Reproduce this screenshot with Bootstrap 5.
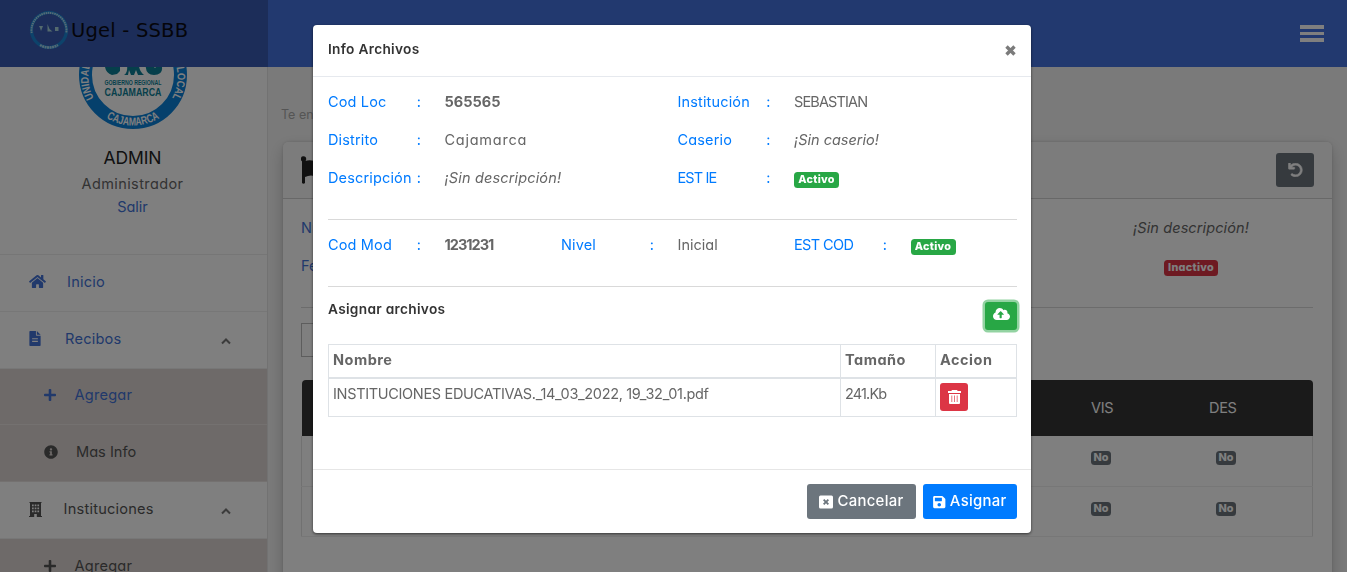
<!DOCTYPE html>
<html lang="es">
<head>
<meta charset="utf-8">
<meta name="viewport" content="width=device-width, initial-scale=1">
<title>Ugel - SSBB</title>
<link href="https://cdn.jsdelivr.net/npm/bootstrap@5.3.0/dist/css/bootstrap.min.css" rel="stylesheet">
<style>
  html, body { height: 100%; overflow: hidden; }
  body { font-family: Inter, "Open Sans", sans-serif; font-feature-settings: "cv11"; font-size: 14.5px; line-height: 24px; color: #666; background: #f5f5f5; }
  svg { fill: currentColor; flex: none; }
  a { text-decoration: none; }
  .brand-zone { width: 268px; background: #385bb3; padding-left: 29px; color: #0a0a14; font: 19.5px "DejaVu Sans", sans-serif; }
  .brand-zone svg, .brand-t { margin-top: -7px; }
  .brand-t { margin-left: 2px; letter-spacing: .2px; }
  .topbar { height: 67px; background: #4472de; color: #fff; }
  .burger { width: 24px; gap: 3px; margin-right: 23px; }
  .burger i { height: 3.4px; background: #fff; }
  .shell { height: calc(100vh - 67px); }
  .side { width: 268px; background: #fff; border-right: 1px solid #e5e5e5; }
  .profile { height: 188px; border-bottom: 1px solid #ededed; padding-right: 2px; }
  .profile svg { margin-top: -46px; }
  .profile h5 { font-size: 17.5px; line-height: 22px; margin: 18px 0 3px; color: #222; font-weight: 400; letter-spacing: -.1px; }
  .profile span, .profile a { line-height: 23px; letter-spacing: .4px; }
  .profile a { letter-spacing: 0; }
  .blue { color: #4272d7; }
  .item { height: 56.8px; border-bottom: 1px solid #efefef; padding: 0 36px 2px 29px; font-size: 14.6px; letter-spacing: .22px; color: #555; }
  .item.blue { color: #4272d7; }
  .item.sub { background: #dcd4d2; padding-left: 44px; border-color: #e8e2e0; }
  .main-zone { padding: 36px 15px 0 15px; min-width: 0; }
  .crumb { font-size: 12.5px; line-height: 24px; color: #aaa; margin-left: -2px; margin-bottom: 15px; }
  .panel-card { border: 0; height: 500px; box-shadow: 0 6px 16px rgba(0,0,0,.2), 0 0 3px rgba(0,0,0,.15); }
  .panel-card .card-header { height: 57px; padding: 0 18px; background: #f8f8f8; border-color: #d0d0d0; color: #222; }
  .panel-card .card-body { padding: 17px 19px 0 18px; }
  .btn-undo { width: 38px; height: 34px; background: #6c757d; color: #fff; border-radius: 3px; }
  .info-row { height: 38px; }
  .tail { width: 244px; text-align: center; letter-spacing: .1px; }
  .tag { display: inline-block; position: relative; top: 1px; font-size: 10.8px; line-height: 16px; font-weight: 800; letter-spacing: .3px; color: #fff; padding: 0 4.3px; border-radius: 3.5px; vertical-align: middle; }
  .g { background: #28a745; } .r { background: #dc3545; } .k { background: #6c757d; }
  .filter { height: 34px; width: 220px; border: 1px solid #bbb; margin: 15px 0 23px; }
  .grid-t { width: 1012px; margin: 0; table-layout: fixed; }
  .grid-t th { background: #343434; color: #fff; font-weight: 400; height: 56px; letter-spacing: -.3px; }
  .grid-t tr > * { border: 0; padding: 0; vertical-align: middle; text-align: left; }
  .grid-t thead th:first-child { border-radius: 4px 0 0 0; } .grid-t thead th:last-child { border-radius: 0 4px 0 0; }
  .grid-t td { height: 50px; border-bottom: 1px solid #efefef !important; background: #fff; color: #666; line-height: 14px; padding-bottom: 6px !important; }
  .grid-t td:first-child { border-left: 1px solid #e3e3e3; } .grid-t td:last-child { border-right: 1px solid #e3e3e3; padding-left: 7px; }
  .grid-t .tag { top: 0; line-height: 14px; padding: 0 2.6px; letter-spacing: 0; }
  .modal-dialog { max-width: 718px; margin: 25px 0 0 313px; }
  .modal-content { border: 0; border-radius: 4px; height: 508px; box-shadow: 0 1px 3px rgba(0,0,0,.6); color: #666; }
  .modal-header { height: 52px; padding: 0 15px 4px; border-color: #e6e9ee; color: #333; }
  .bold-t { font-size: 13.7px; font-weight: 600; letter-spacing: .3px; color: #333; }
  .modal-body { padding: 13px 14px 0 15px; }
  .modal-body .row { --bs-gutter-x: 10px; height: 38px; }
  .lab { color: #007bff; letter-spacing: .15px; }
  .lab::after { content: ":"; position: absolute; left: 93.8px; }
  .row > div { position: relative; white-space: nowrap; }
  .modal-body b { font-weight: 700; }
  .caps { letter-spacing: -.85px; }
  .wide-t { letter-spacing: .75px; }
  hr { margin: 0; border-color: #ccc; opacity: .75; }
  .sm-b { width: 28px; height: 28px; border-radius: 3px; color: #fff; }
  .up { width: 32px; box-shadow: 0 0 0 2.5px rgba(40,167,69,.5); padding-bottom: 5px; }
  .files { width: 689px; margin: 0; color: #666; border-color: #dee2e6; table-layout: fixed; }
  .files tr > * { padding: 3px 4px 5px; border: 1px solid #dee2e6; color: #666; background: none; }
  .files tbody td:last-child { padding: 4px 4px 5px; }
  .files thead th { border-bottom-width: 2px; font-weight: 700; height: 33px; font-size: 14.5px; letter-spacing: .5px; }
  .files .sm-b { display: flex; }
  .fname { letter-spacing: -.33px; }
  .modal-footer { height: 64px; border-color: #e6e6e6; padding: 0 14px; gap: 7px; }
  .modal-footer .btn { height: 35px; border: 0; border-radius: 3px; padding: 0; margin: 0; color: #fff; font-size: 14.9px; letter-spacing: .3px; font-weight: 500; display: flex; align-items: center; justify-content: center; gap: 4px; }
</style>
</head>
<body>
<header class="topbar d-flex align-items-center justify-content-between">
  <div class="brand-zone h-100 d-flex align-items-center">
    <svg width="40" height="40" viewBox="0 0 40 40">
      <circle cx="20" cy="20" r="17.500" fill="none" stroke="#1a86d6" stroke-width="3.200"/>
      <g fill="none" stroke="#a9d3ea"><path d="M2.700 23a17.500 17.500 0 1 1 34.600 0" stroke-width="2" stroke-dasharray="1.600 .6"/><path d="M11 35a17.500 17.500 0 0 0 18 0" stroke-width="2.600" stroke-dasharray="2 .5"/></g>
      <path fill="#a8d4dc" d="M10 16h4l-2 5-1-3zM18.500 14l2 5 3 2.500h-5zM26 17h3.500v4H26z"/>
    </svg>
    <span class="brand-t">Ugel - SSBB</span>
  </div>
  <div class="burger d-flex flex-column"><i></i><i></i><i></i></div>
</header>
<div class="shell d-flex overflow-hidden">
  <aside class="side flex-shrink-0 overflow-hidden">
    <div class="profile d-flex flex-column align-items-center overflow-hidden">
      <svg width="108" height="108" viewBox="0 0 108 108">
        <circle cx="54" cy="54" r="47.500" fill="#fff" stroke="#0a80d8" stroke-width="13"/>
        <path id="lo" d="M3.500 54a50.500 50.500 0 0 0 101 0" fill="none"/>
        <path id="up" d="M18 82a44.500 44.500 0 1 1 72 0" fill="none"/>
        <g fill="#fff" font-family="Liberation Sans Narrow, Liberation Sans" font-weight="700" text-anchor="middle">
          <text font-size="11.500"><textPath href="#lo" startOffset="50%" textLength="56" lengthAdjust="spacingAndGlyphs">CAJAMARCA</textPath></text>
          <text font-size="11"><textPath href="#up" startOffset="50%" textLength="184" lengthAdjust="spacingAndGlyphs">UNIDAD DE GESTION EDUCATIVA LOCAL</textPath></text>
        </g>
        <g fill="#0d7f96"><path d="M26 36h9v8q1 3 6 1v5l-3 3-5 1q-6-2-7-8zM45 54q4-2 3-10h12q0 6 5 10h-6l-2-5-2 5h-3l-2-5-1 5zM67 40q-2 14 8 14 9 0 8-8l-4-2-3 3-3-3v-4z"/>
        <g font-family="Liberation Sans" font-weight="700" text-anchor="middle"><text x="54" y="64" font-size="6.500" textLength="57" lengthAdjust="spacingAndGlyphs">GOBIERNO REGIONAL</text><text x="54" y="74.500" font-size="11.500" textLength="57" lengthAdjust="spacingAndGlyphs">CAJAMARCA</text></g></g>
      </svg>
      <h5>ADMIN</h5><span>Administrador</span><a class="blue">Salir</a>
    </div>
    <nav>
      <a class="item blue d-flex align-items-center"><svg width="17" height="15" viewBox="0 0 576 512"><path d="M280.370 148.260L96 300.110V464a16 16 0 0 0 16 16l112.060-.29a16 16 0 0 0 15.920-16V368a16 16 0 0 1 16-16h64a16 16 0 0 1 16 16v95.640a16 16 0 0 0 16 16.050L464 480a16 16 0 0 0 16-16V300L295.670 148.260a12.190 12.190 0 0 0-15.300 0zM571.600 251.470L488 182.560V44.050a12 12 0 0 0-12-12h-56a12 12 0 0 0-12 12v72.610L318.470 43a48 48 0 0 0-61 0L4.340 251.470a12 12 0 0 0-1.600 16.900l25.500 31A12 12 0 0 0 45.150 301l235.220-193.740a12.190 12.190 0 0 1 15.300 0L530.900 301a12 12 0 0 0 16.900-1.600l25.500-31a12 12 0 0 0-1.700-16.930z"/></svg><span style="margin-left:21px">Inicio</span></a>
      <a class="item blue d-flex align-items-center"><svg width="12" height="15" viewBox="0 0 384 512"><path fill-rule="evenodd" d="M224 136V0H24C10 0 0 10 0 24v464c0 14 10 24 24 24h336c14 0 24-10 24-24V160H248c-13 0-24-11-24-24zm66 110v38H94v-38zm0 90v38H94v-38zM256 0l128 128H256z"/></svg><span style="margin-left:24px">Recibos</span><svg class="ms-auto mt-1" width="10" height="10" viewBox="0 0 10 10"><path d="M1 7.500l4-4 4 4" fill="none" stroke="#777" stroke-width="2"/></svg></a>
      <a class="item sub blue d-flex align-items-center"><svg width="12" height="14" viewBox="0 0 448 512"><path d="M416 208H272V64c0-18-14-32-32-32h-32c-18 0-32 14-32 32v144H32c-18 0-32 14-32 32v32c0 18 14 32 32 32h144v144c0 18 14 32 32 32h32c18 0 32-14 32-32V304h144c18 0 32-14 32-32v-32c0-18-14-32-32-32z"/></svg><span style="margin-left:18.500px">Agregar</span></a>
      <a class="item sub d-flex align-items-center"><svg width="14" height="14" viewBox="0 0 512 512"><path d="M256 8C119 8 8 119 8 256s111 248 248 248 248-111 248-248S393 8 256 8zm0 110c23 0 42 19 42 42s-19 42-42 42-42-19-42-42 19-42 42-42zm56 254c0 7-5 12-12 12h-88c-7 0-12-5-12-12v-24c0-7 5-12 12-12h12v-64h-12c-7 0-12-5-12-12v-24c0-7 5-12 12-12h64c7 0 12 5 12 12v100h12c7 0 12 5 12 12v24z"/></svg><span style="margin-left:18px;letter-spacing:0">Mas Info</span></a>
      <a class="item d-flex align-items-center"><svg width="13" height="15" viewBox="0 0 13 15"><path fill-rule="evenodd" d="M.5 0h12v1H12v13h1v1H7.800v-3H5.200v3H0v-1h1V1H.500zM3 2.500v1.700h1.700V2.500zm2.700 0v1.700h1.700V2.500zm2.700 0v1.700h1.700V2.500zM3 5.500v1.700h1.700V5.500zm2.700 0v1.700h1.700V5.500zm2.700 0v1.700h1.700V5.500zM3 8.500v1.700h1.700V8.500zm2.700 0v1.700h1.700V8.500zm2.700 0v1.700h1.700V8.500z"/></svg><span style="margin-left:21.500px">Instituciones</span><svg class="ms-auto mt-1" width="10" height="10" viewBox="0 0 10 10"><path d="M1 7.500l4-4 4 4" fill="none" stroke="#777" stroke-width="2"/></svg></a>
      <a class="item sub d-flex align-items-center"><svg width="12" height="14" viewBox="0 0 448 512"><path d="M416 208H272V64c0-18-14-32-32-32h-32c-18 0-32 14-32 32v144H32c-18 0-32 14-32 32v32c0 18 14 32 32 32h144v144c0 18 14 32 32 32h32c18 0 32-14 32-32V304h144c18 0 32-14 32-32v-32c0-18-14-32-32-32z"/></svg><span style="margin-left:18.500px">Agregar</span></a>
    </nav>
  </aside>
  <main class="main-zone flex-grow-1">
    <div class="crumb">Te encuentras en</div>
    <div class="card panel-card">
      <div class="card-header d-flex align-items-center justify-content-between">
        <svg width="30" height="28" viewBox="0 0 30 28"><circle cx="2.500" cy="3" r="2.700"/><path d="M1 3h3v24q-1.500 1.500-3 0zM4 5q6-2 12 1t13 0v15q-7 3-13 0t-12 0z"/></svg>
        <button class="btn btn-undo p-0 d-flex align-items-center justify-content-center"><svg width="15" height="14" viewBox="0 0 512 512"><path stroke="currentColor" stroke-width="20" d="M212 224H12c-7 0-12-5-12-12V12C0 5 5 0 12 0h48c7 0 12 5 12 12v78C118 39 184 7 258 8c137 1 246 112 246 249 0 136-111 247-248 247-64 0-122-24-166-64-5-5-5-13-1-18l34-34c5-4 12-4 17 0 31 27 71 44 116 44 97 0 176-79 176-176S353 80 256 80c-58 0-110 28-142 72h98c7 0 12 5 12 12v48c0 7-5 12-12 12z"/></svg></button>
      </div>
      <div class="card-body">
        <div class="info-row d-flex justify-content-between"><span class="blue">Nro</span><i class="tail">¡Sin descripción!</i></div>
        <div class="info-row d-flex justify-content-between"><span class="blue">Fecha</span><span class="tail"><span class="tag r">Inactivo</span></span></div>
        <hr style="margin-top:15px">
        <div class="filter"></div>
        <table class="table grid-t">
          <colgroup><col style="width:789.500px"><col style="width:118px"><col></colgroup>
          <thead><tr><th></th><th>VIS</th><th>DES</th></tr></thead>
          <tbody>
            <tr><td></td><td><span class="tag k">No</span></td><td><span class="tag k">No</span></td></tr>
            <tr><td></td><td><span class="tag k">No</span></td><td><span class="tag k">No</span></td></tr>
          </tbody>
        </table>
      </div>
    </div>
  </main>
</div>
<div class="modal-backdrop show"></div>
<div class="modal d-block" tabindex="-1">
  <div class="modal-dialog">
    <div class="modal-content">
      <div class="modal-header">
        <span class="bold-t">Info Archivos</span>
        <svg width="11" height="11" viewBox="0 0 11 11" style="color:#7b7b7b;margin-top:3px"><path d="M1.500 1.500l8 8m0-8l-8 8" stroke="currentColor" stroke-width="3.400"/></svg>
      </div>
      <div class="modal-body">
        <div class="row"><div class="col-2 lab">Cod Loc</div><div class="col-4"><b>565565</b></div><div class="col-2 lab">Institución</div><div class="col-4 caps">SEBASTIAN</div></div>
        <div class="row"><div class="col-2 lab">Distrito</div><div class="col-4 wide-t">Cajamarca</div><div class="col-2 lab">Caserio</div><div class="col-4"><i>¡Sin caserio!</i></div></div>
        <div class="row"><div class="col-2 lab">Descripción</div><div class="col-4"><i style="letter-spacing:.15px">¡Sin descripción!</i></div><div class="col-2 lab caps">EST IE</div><div class="col-4"><span class="tag g">Activo</span></div></div>
        <hr style="margin:15px 0 13px">
        <div class="row"><div class="col-2 lab">Cod Mod</div><div class="col-2"><b style="letter-spacing:-1px">1231231</b></div><div class="col-2 lab">Nivel</div><div class="col-2">Inicial</div><div class="col-2 lab" style="letter-spacing:-.6px">EST COD</div><div class="col-2"><span class="tag g">Activo</span></div></div>
        <hr style="margin:15px 0 11px">
        <div class="d-flex justify-content-between align-items-start" style="height:46px">
          <span class="bold-t" style="line-height:22px">Asignar archivos</span>
          <button class="btn btn-success g sm-b up px-0 pt-0 border-0 d-flex align-items-center justify-content-center" style="margin-top:4px"><svg width="17" height="14" viewBox="0 0 640 512"><path d="M538 227c4-11 6-23 6-35 0-53-43-96-96-96-20 0-38 6-53 16-28-48-80-80-139-80-88 0-160 72-160 160v8C40 220 0 273 0 336c0 80 65 144 144 144h368c71 0 128-57 128-128 0-62-44-114-102-125zM393 288h-65v112c0 9-7 16-16 16h-48c-9 0-16-7-16-16V288h-65c-15 0-22-17-12-27l106-106c6-6 16-6 22 0l106 106c10 10 3 27-12 27z"/></svg></button>
        </div>
        <table class="table files">
          <colgroup><col style="width:512px"><col style="width:95px"><col></colgroup>
          <thead><tr><th>Nombre</th><th>Tamaño</th><th>Accion</th></tr></thead>
          <tbody><tr><td class="fname">INSTITUCIONES EDUCATIVAS._14_03_2022, 19_32_01.pdf</td><td class="caps">241.Kb</td><td><button class="btn sm-b r p-0 border-0 align-items-center justify-content-center"><svg width="13" height="14" viewBox="0 0 13 14"><path d="M4 0h5l.7 1H13v2H0V1h3.300zM1 4h11v9q0 1-1 1H2q-1 0-1-1z"/><path d="M3.800 5.500v6.500M6.500 5.500v6.500M9.200 5.500v6.500" stroke="#dc3545" stroke-width=".7"/></svg></button></td></tr></tbody>
        </table>
      </div>
      <div class="modal-footer flex-nowrap">
        <button class="btn k" style="width:109px"><svg width="14" height="14" viewBox="0 0 14 14"><path fill-rule="evenodd" d="M1.500.5h11q1.500 0 1.500 1.500v10q0 1.500-1.500 1.500h-11Q0 13.500 0 12V2Q0 .5 1.500.5zM4 5.300L5.700 7 4 8.700 5.300 10 7 8.300 8.700 10 10 8.700 8.300 7 10 5.300 8.700 4 7 5.700 5.300 4z"/></svg>Cancelar</button>
        <button class="btn" style="width:94px;background:#007bff"><svg width="12.500" height="14" viewBox="0 0 448 512"><path d="M434 130l-84-84a48 48 0 0 0-34-14H48C21 32 0 53 0 80v352c0 27 21 48 48 48h352c27 0 48-21 48-48V164a48 48 0 0 0-14-34zM224 416c-35 0-64-29-64-64s29-64 64-64 64 29 64 64-29 64-64 64zm96-305v101c0 7-5 12-12 12H76c-7 0-12-5-12-12V108c0-7 5-12 12-12h229c3 0 6 1 8 4l4 3a12 12 0 0 1 3 8z"/></svg>Asignar</button>
      </div>
    </div>
  </div>
</div>
<script src="https://cdn.jsdelivr.net/npm/bootstrap@5.3.0/dist/js/bootstrap.bundle.min.js"></script>
</body>
</html>
